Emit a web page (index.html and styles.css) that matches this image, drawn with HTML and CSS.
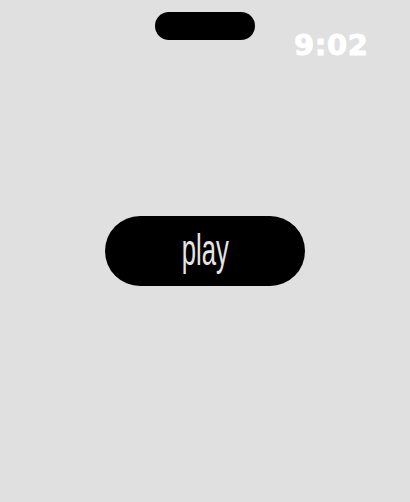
FILE: index.html
```html
<!DOCTYPE html>
<html>
<head>
<meta charset="utf-8">
<link rel="stylesheet" href="styles.css">
</head>
<body>
<div class="screen">
  <div class="status">
    <div class="island"></div>
    <div class="time">9:02</div>
  </div>
  <div class="center">
    <button class="play"><span class="label">play</span></button>
  </div>
</div>
</body>
</html>
```
FILE: styles.css
```css
html, body {
  margin: 0;
  padding: 0;
  background: #e0e0e0;
}
.screen {
  width: 410px;
  height: 502px;
  position: relative;
  overflow: hidden;
}
.status {
  height: 60px;
  position: relative;
}
.island {
  position: absolute;
  left: 155px;
  top: 12px;
  width: 100px;
  height: 28px;
  border-radius: 14px;
  background: #000;
}
.time {
  position: absolute;
  left: 294px;
  top: 27px;
  font-family: "DejaVu Sans", sans-serif;
  font-weight: bold;
  font-size: 29px;
  letter-spacing: 0.6px;
  color: #fff;
  line-height: 36px;
  -webkit-text-stroke: 0.9px #fff;
}
.center {
  display: flex;
  justify-content: center;
  padding-top: 156px;
}
.play {
  width: 200px;
  height: 70px;
  border: none;
  border-radius: 35px;
  background: #000;
  display: flex;
  align-items: center;
  justify-content: center;
  padding: 0;
}
.label {
  display: inline-block;
  font-family: "Liberation Sans", sans-serif;
  font-size: 45px;
  color: #e4e4e4;
  transform: scaleX(0.57);
  line-height: 44px;
  margin-top: -2px;
}
```
